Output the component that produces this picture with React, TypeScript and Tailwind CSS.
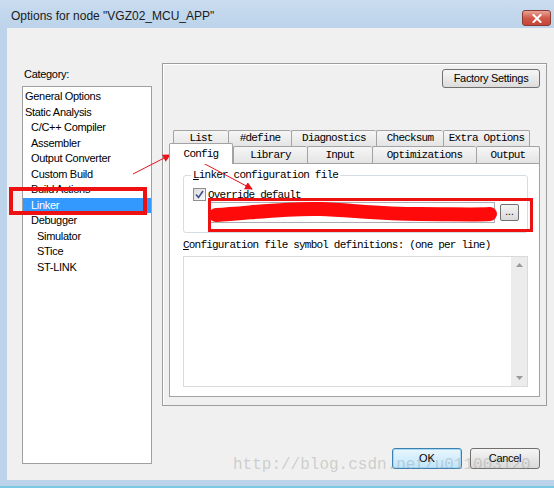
import React from "react";

const mono = "font-['Liberation_Mono','Courier_New',monospace] text-[11px] tracking-[-0.8px]";

function Tab({ w, label, last }: { w: number; label: string; last?: boolean }) {
  return (
    <div
      style={{ width: w }}
      className={`h-full flex items-center justify-center border-t border-l ${last ? "border-r" : ""} border-[#a3a3a3] rounded-t-[2px] bg-gradient-to-b from-[#f6f6f6] to-[#e4e4e4] text-black ${mono}`}
    >
      {label}
    </div>
  );
}

export default function App() {
  const items: { t: string; l: number; sel?: boolean }[] = [
    { t: "General Options", l: 0 },
    { t: "Static Analysis", l: 0 },
    { t: "C/C++ Compiler", l: 1 },
    { t: "Assembler", l: 1 },
    { t: "Output Converter", l: 1 },
    { t: "Custom Build", l: 1 },
    { t: "Build Actions", l: 1 },
    { t: "Linker", l: 1, sel: true },
    { t: "Debugger", l: 1 },
    { t: "Simulator", l: 2 },
    { t: "STice", l: 2 },
    { t: "ST-LINK", l: 2 },
  ];
  const pad = ["pl-[2px]", "pl-[8px]", "pl-[14px]"];

  return (
    <div className="relative w-[554px] h-[488px] overflow-hidden flex flex-col bg-[#bcd3ea] font-['Liberation_Sans',Arial,sans-serif] text-black">
      {/* Title bar */}
      <div className="h-[28px] shrink-0 flex items-start bg-gradient-to-b from-[#cadcf0] to-[#bcd3ea]">
        <div className="mt-[9px] pl-[11px] text-[12px] leading-[14px] text-[#1a1a1a]">
          Options for node "VGZ02_MCU_APP"
        </div>
        <div className="ml-auto mr-[3px] mt-[10px] w-[29px] h-[16px] rounded-[3px] border border-[#8a3a32] bg-gradient-to-b from-[#e8a494] via-[#d0594a] to-[#c44535] flex items-center justify-center">
          <svg width="10" height="9" viewBox="0 0 10 9">
            <path d="M1.5 1 L8.5 8 M8.5 1 L1.5 8" stroke="#fff" strokeWidth="2" strokeLinecap="square" />
          </svg>
        </div>
      </div>

      {/* Body */}
      <div className="flex-1 flex min-h-0">
        <div className="w-[7px] shrink-0" />
        <div className="flex-1 bg-[#f0f0f0] flex">
          {/* Left column */}
          <div className="ml-[15px] w-[130px] flex flex-col">
            <div className="mt-[39px] h-[14px] leading-[14px] pl-[2px] text-[11px] tracking-[-0.3px]">Category:</div>
            <div className="mt-[5px] h-[378px] border border-[#a0a0a0] bg-white pt-[2px]">
              {items.map((it) => (
                <div
                  key={it.t}
                  className={`h-[15.55px] leading-[15.55px] text-[11px] tracking-[-0.3px] whitespace-nowrap ${pad[it.l]} ${it.sel ? "bg-[#3399ff] text-white" : ""}`}
                >
                  {it.t}
                </div>
              ))}
            </div>
          </div>

          {/* Right column */}
          <div className="ml-[10px] w-[385px] flex flex-col">
            <div className="mt-[35px] h-[343px] border border-[#9c9c9c] shadow-[inset_1px_1px_0_#ffffff] flex flex-col">
              <div className="mt-[5px] mr-[6px] self-end w-[98px] h-[19px] rounded-[3px] border border-[#707070] bg-gradient-to-b from-[#f7f7f7] to-[#dcdcdc] flex items-center justify-center text-[11px] tracking-[-0.3px]">
                Factory Settings
              </div>
              {/* Tab control */}
              <div className="mt-[42px] mx-[6px] flex flex-col h-[267px]">
                <div className="h-[16px] flex pl-[4px] shrink-0">
                  <Tab w={55} label="List" />
                  <Tab w={63} label="#define" />
                  <Tab w={85} label="Diagnostics" />
                  <Tab w={67} label="Checksum" />
                  <Tab w={87} label="Extra Options" last />
                </div>
                <div className="h-[17px] flex items-end shrink-0">
                  <div
                    className={`relative z-10 w-[64px] h-[21px] -mb-px flex items-center justify-center border-t border-l border-r border-[#a3a3a3] rounded-t-[2px] bg-white ${mono}`}
                  >
                    Config
                  </div>
                  <div className="h-[17px] flex">
                    <Tab w={74} label="Library" />
                    <Tab w={65} label="Input" />
                    <Tab w={104} label="Optimizations" />
                    <Tab w={64} label="Output" last />
                  </div>
                </div>
                {/* Tab page */}
                <div className="flex-1 border border-[#a3a3a3] bg-white flex flex-col px-[13px] pr-[11px]">
                  {/* Group box */}
                  <div className="relative mt-[11px] h-[58px] border border-[#d5dde3] rounded-[3px] pt-[12px] pl-[9px] shrink-0">
                    <div className={`absolute -top-[8px] left-[7px] px-[2px] bg-white leading-[14px] ${mono}`}>
                      <span className="underline">L</span>inker configuration file
                    </div>
                    <div className="flex items-center h-[13px]">
                      <div className="w-[13px] h-[13px] border border-[#8e8f8f] bg-gradient-to-br from-[#dcdcdc] to-[#fbfbfb] flex items-center justify-center">
                        <svg width="9" height="9" viewBox="0 0 9 9">
                          <path d="M1 4.5 L3.5 7.5 L8 1" fill="none" stroke="#3d4f8f" strokeWidth="1.6" />
                        </svg>
                      </div>
                      <div className={`ml-[2px] leading-[14px] ${mono}`}>
                        <span className="underline">O</span>verride default
                      </div>
                    </div>
                    <div className="mt-[1px] ml-[17px] flex items-center">
                      <div className="w-[285px] h-[21px] border border-[#abadb3] bg-white" />
                      <div className="ml-[5px] w-[19px] h-[17px] rounded-[2px] border border-[#707070] bg-gradient-to-b from-[#f4f4f4] to-[#d9d9d9] flex items-end justify-center pb-[3px] text-[10px] leading-[10px]">
                        ...
                      </div>
                    </div>
                  </div>
                  <div className={`mt-[6px] h-[12px] leading-[12px] whitespace-nowrap ${mono}`}>
                    <span className="underline">C</span>onfiguration file symbol definitions: (one per line)
                  </div>
                  <div className="mt-[5px] h-[131px] border border-[#dadada] bg-white flex justify-end">
                    <div className="w-[16px] h-full bg-[#ececec] flex flex-col items-center justify-between py-[6px]">
                      <svg width="7" height="4" viewBox="0 0 7 4">
                        <path d="M0 4 L3.5 0 L7 4 Z" fill="#9a9a9a" />
                      </svg>
                      <svg width="7" height="4" viewBox="0 0 7 4">
                        <path d="M0 0 L3.5 4 L7 0 Z" fill="#9a9a9a" />
                      </svg>
                    </div>
                  </div>
                </div>
              </div>
            </div>

            {/* Buttons */}
            <div className="mt-[42px] flex justify-end gap-[8px] pr-[7px]">
              <div className="w-[70px] h-[21px] rounded-[3px] border border-[#3c7fb1] bg-gradient-to-b from-[#eaf6fd] to-[#bee6fd] shadow-[inset_0_0_0_1px_#a7d9f5] flex items-center justify-center text-[11px]">
                OK
              </div>
              <div className="w-[70px] h-[21px] rounded-[3px] border border-[#707070] bg-gradient-to-b from-[#f5f5f5] to-[#dadada] flex items-center justify-center text-[11px] tracking-[-0.3px]">
                Cancel
              </div>
            </div>
          </div>
        </div>
      </div>

      {/* Bottom frame */}
      <div className="h-[8px] shrink-0 border-b-2 border-[#7cc7e4]" />

      {/* Watermark */}
      <div className="pointer-events-none absolute left-[233px] top-[456px] font-['Liberation_Mono','Courier_New',monospace] text-[16px] leading-[18px] text-[rgba(150,150,150,0.4)]">
        http://blog.csdn.net/u011003120
      </div>

      {/* Red annotations */}
      <svg className="pointer-events-none absolute left-0 top-0" width="554" height="488" viewBox="0 0 554 488">
        <defs>
          <marker id="ah" markerWidth="8" markerHeight="8" refX="7" refY="4" orient="auto" markerUnits="userSpaceOnUse">
            <path d="M0 0 L8 4 L0 8 Z" fill="#e8141b" />
          </marker>
        </defs>
        <rect x="11" y="189" width="134" height="24" fill="none" stroke="#ee1111" strokeWidth="4" />
        <rect x="173.5" y="147.5" width="51" height="14" fill="none" stroke="#ee1111" strokeWidth="3" />
        <rect x="209.5" y="199.5" width="322" height="31" fill="none" stroke="#ee1111" strokeWidth="3" />
        <line x1="133" y1="174" x2="170" y2="155" stroke="#e8141b" strokeWidth="1" markerEnd="url(#ah)" />
        <line x1="203" y1="163" x2="252" y2="189" stroke="#e8141b" strokeWidth="1" markerEnd="url(#ah)" />
        <path
          d="M216 215 C 250 213, 285 208, 320 209 C 350 210, 380 214, 420 214 C 450 214, 475 215, 490 214"
          fill="none"
          stroke="#ff0a0a"
          strokeWidth="14"
          strokeLinecap="round"
        />
      </svg>
    </div>
  );
}
